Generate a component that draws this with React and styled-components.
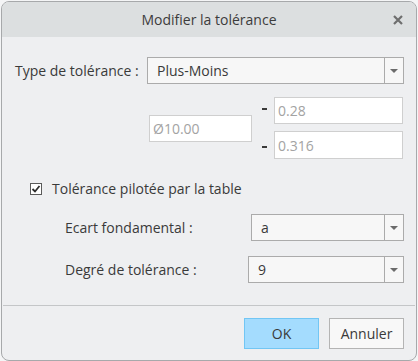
import styled, { createGlobalStyle } from 'styled-components'

const GlobalStyle = createGlobalStyle`
    html, body {
        margin: 0;
        padding: 0;
        background: #f4f5f6;
    }
    body {
        font-family: 'Open Sans', 'Noto Sans', sans-serif;
        color: #3a3a3a;
    }
`;

const Dialog = styled.div`
    width: 414px;
    height: 358px;
    margin: 1px 0 0 1px;
    border: 1px solid #a7a9ab;
    border-radius: 8px;
    background: #eeeff1;
    overflow: hidden;
    display: flex;
    flex-direction: column;
`;

const TitleBar = styled.div`
    height: 35px;
    flex: none;
    background: #dcdfe0;
    display: flex;
    align-items: center;
    justify-content: center;
    position: relative;
    font-size: 14px;
    color: #3c3c3c;
`;

const CloseButton = styled.div`
    position: absolute;
    right: 13px;
    top: 13px;
    width: 10px;
    height: 10px;
    display: flex;
`;

const Body = styled.div`
    flex: 1;
    display: flex;
    flex-direction: column;
    padding: 20px 12px 0 13px;
`;

const Row = styled.div`
    display: flex;
    align-items: center;
    padding-left: ${p => p.indent || 0}px;
    margin-top: ${p => p.top || 0}px;
`;

const Label = styled.div`
    font-size: 14px;
    flex: none;
    white-space: nowrap;
`;

const SelectBox = styled.div`
    width: ${p => p.width}px;
    height: 27px;
    box-sizing: border-box;
    border: 1px solid #ababab;
    background: #f7f7f7;
    display: flex;
    align-items: stretch;
    margin-left: auto;
`;

const SelectValue = styled.div`
    flex: 1;
    display: flex;
    align-items: center;
    padding-left: 9px;
    font-size: 14px;
`;

const SelectArrow = styled.div`
    width: 18px;
    border-left: 1px solid #ababab;
    display: flex;
    align-items: center;
    justify-content: center;

    &::after {
        content: '';
        border-left: 4px solid transparent;
        border-right: 4px solid transparent;
        border-top: 4px solid #6b6b6b;
    }
`;

const Values = styled.div`
    display: flex;
    align-items: center;
    margin: 13px 0 0 134px;
`;

const Field = styled.div`
    width: ${p => p.width}px;
    height: ${p => p.height || 27}px;
    box-sizing: border-box;
    border: 1px solid #cfcfcf;
    background: #ffffff;
    color: #a3a3a3;
    font-size: 14px;
    display: flex;
    align-items: center;
    padding-left: 3px;
`;

const Limits = styled.div`
    display: flex;
    flex-direction: column;
    gap: 7px;
    margin-left: 10px;
`;

const Limit = styled.div`
    display: flex;
    align-items: center;
    gap: 7px;
`;

const Dash = styled.div`
    width: 5px;
    height: 2px;
    background: #3a3a3a;
    margin-top: ${p => p.shift || 0}px;
`;

const CheckRow = styled.label`
    display: flex;
    align-items: center;
    gap: 10px;
    margin: 20px 0 0 15px;
    font-size: 14px;
`;

const CheckBox = styled.span`
    width: 12px;
    height: 12px;
    box-sizing: border-box;
    border: 1px solid #5a5a5a;
    background: #fff;
    display: flex;
    align-items: center;
    justify-content: center;
`;

const Footer = styled.div`
    border-top: 1px solid #c4c6c8;
    margin: 0 1px;
    height: 55px;
    flex: none;
    display: flex;
    justify-content: flex-end;
    align-items: flex-start;
    gap: 10px;
    padding: 12px 11px 0 0;
    box-sizing: border-box;
`;

const Button = styled.button`
    width: 75px;
    height: 31px;
    box-sizing: border-box;
    font-family: inherit;
    font-size: 14px;
    color: #3a3a3a;
    border: 1px solid ${p => p.primary ? '#72c6f4' : '#b4b4b4'};
    background: ${p => p.primary ? '#a4dcfe' : '#f8f8f8'};
    padding: 0;
`;

const App = () => {
    return (
        <>
            <GlobalStyle />
            <Dialog>
                <TitleBar>
                    Modifier la tolérance
                    <CloseButton>
                        <svg width="10" height="10" viewBox="0 0 10 10">
                            <path d="M1 1 L9 9 M9 1 L1 9" stroke="#6e6e6e" strokeWidth="2.2" />
                        </svg>
                    </CloseButton>
                </TitleBar>
                <Body>
                    <Row>
                        <Label>Type de tolérance :</Label>
                        <SelectBox width={257}>
                            <SelectValue>Plus-Moins</SelectValue>
                            <SelectArrow />
                        </SelectBox>
                    </Row>
                    <Values>
                        <Field width={103}>Ø10.00</Field>
                        <Limits>
                            <Limit>
                                <Dash shift={-3} />
                                <Field width={129}>0.28</Field>
                            </Limit>
                            <Limit>
                                <Dash shift={4} />
                                <Field width={129} height={28}>0.316</Field>
                            </Limit>
                        </Limits>
                    </Values>
                    <CheckRow>
                        <CheckBox>
                            <svg width="10" height="10" viewBox="0 0 10 10">
                                <path d="M1.5 5 L4 7.5 L8.5 2" stroke="#2e2e2e" strokeWidth="1.8" fill="none" />
                            </svg>
                        </CheckBox>
                        Tolérance pilotée par la table
                    </CheckRow>
                    <Row indent={50} top={16}>
                        <Label>Ecart fondamental :</Label>
                        <SelectBox width={153}>
                            <SelectValue>a</SelectValue>
                            <SelectArrow />
                        </SelectBox>
                    </Row>
                    <Row indent={50} top={15}>
                        <Label>Degré de tolérance :</Label>
                        <SelectBox width={156}>
                            <SelectValue>9</SelectValue>
                            <SelectArrow />
                        </SelectBox>
                    </Row>
                </Body>
                <Footer>
                    <Button primary>OK</Button>
                    <Button>Annuler</Button>
                </Footer>
            </Dialog>
        </>
    );
}

export default App;
